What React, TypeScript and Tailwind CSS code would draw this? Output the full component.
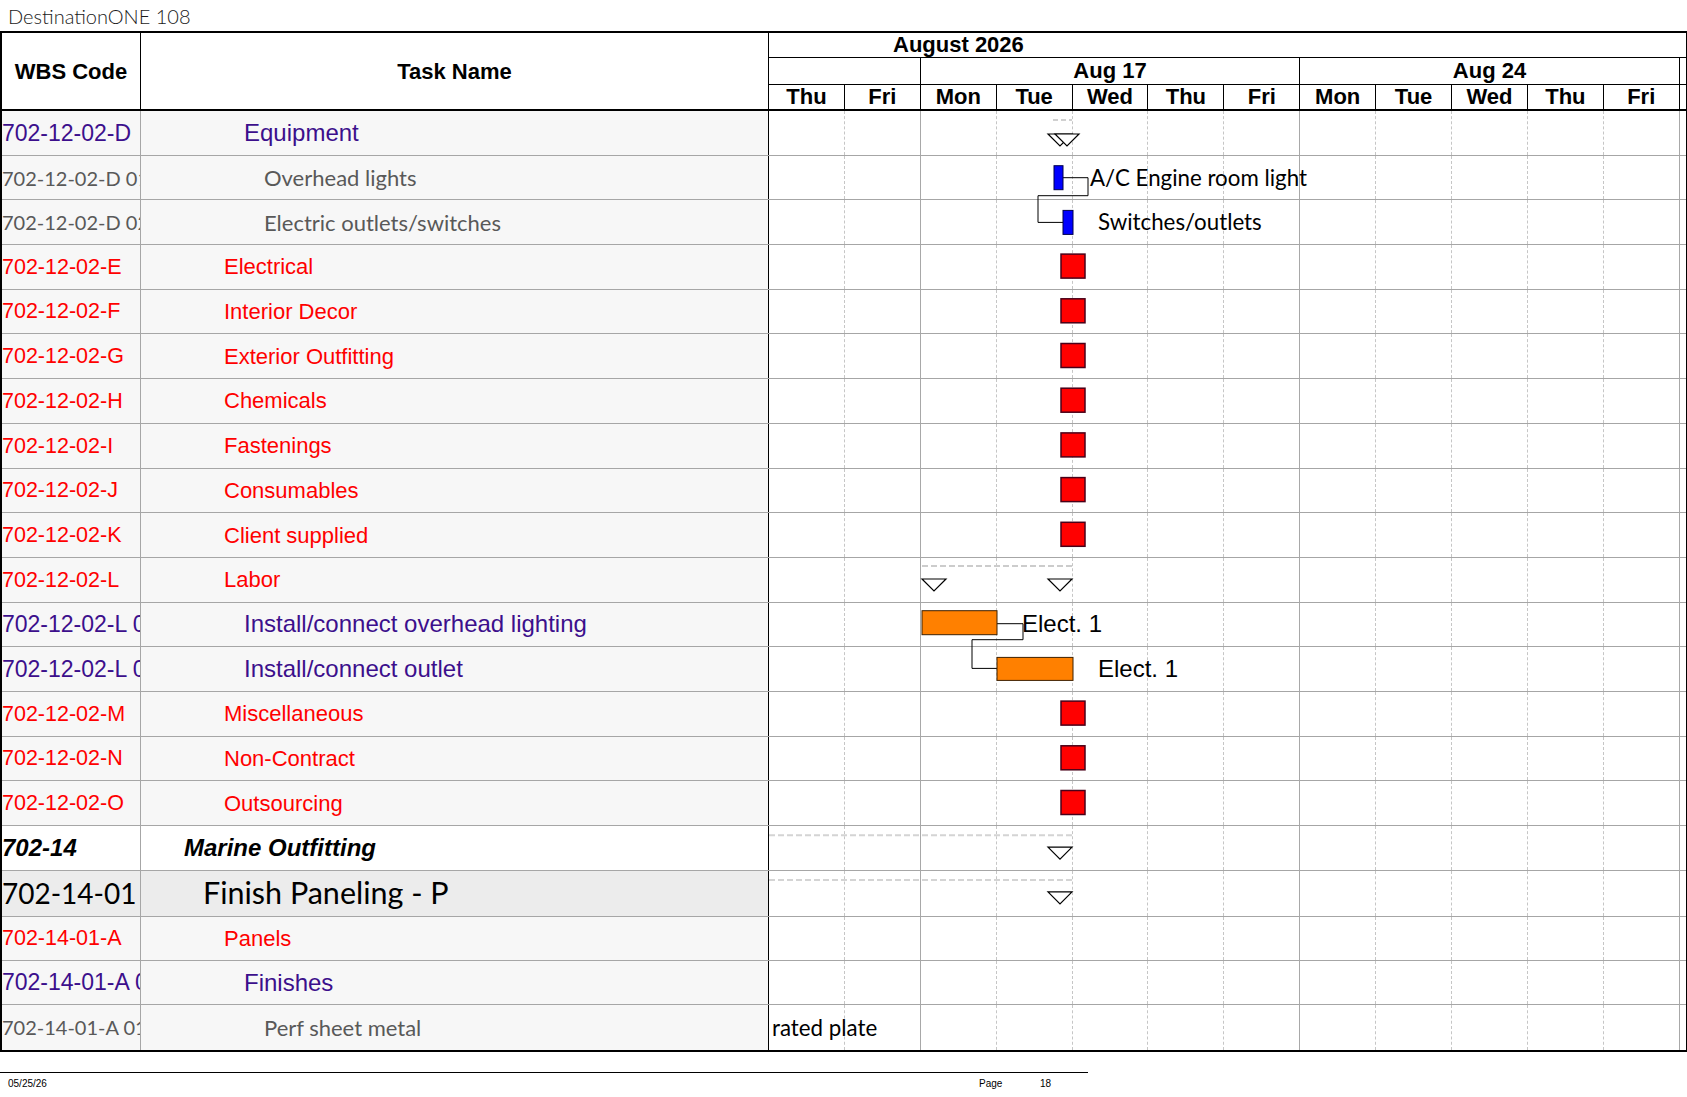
import React from "react";

type Kind = "purple" | "red" | "grey" | "bold" | "big";

type Row = {
  wbs: string;
  name: string;
  kind: Kind;
  indent: number;
  h: number;
  milestone?: boolean;
};

const rows: Row[] = [
  { wbs: "702-12-02-D", name: "Equipment", kind: "purple", indent: 103, h: 44.7 },
  { wbs: "702-12-02-D 01", name: "Overhead lights", kind: "grey", indent: 123, h: 44.7 },
  { wbs: "702-12-02-D 02", name: "Electric outlets/switches", kind: "grey", indent: 123, h: 44.7 },
  { wbs: "702-12-02-E", name: "Electrical", kind: "red", indent: 83, h: 44.7, milestone: true },
  { wbs: "702-12-02-F", name: "Interior Decor", kind: "red", indent: 83, h: 44.7, milestone: true },
  { wbs: "702-12-02-G", name: "Exterior Outfitting", kind: "red", indent: 83, h: 44.7, milestone: true },
  { wbs: "702-12-02-H", name: "Chemicals", kind: "red", indent: 83, h: 44.7, milestone: true },
  { wbs: "702-12-02-I", name: "Fastenings", kind: "red", indent: 83, h: 44.7, milestone: true },
  { wbs: "702-12-02-J", name: "Consumables", kind: "red", indent: 83, h: 44.7, milestone: true },
  { wbs: "702-12-02-K", name: "Client supplied", kind: "red", indent: 83, h: 44.7, milestone: true },
  { wbs: "702-12-02-L", name: "Labor", kind: "red", indent: 83, h: 44.7 },
  { wbs: "702-12-02-L 01", name: "Install/connect overhead lighting", kind: "purple", indent: 103, h: 44.7 },
  { wbs: "702-12-02-L 02", name: "Install/connect outlet", kind: "purple", indent: 103, h: 44.7 },
  { wbs: "702-12-02-M", name: "Miscellaneous", kind: "red", indent: 83, h: 44.7, milestone: true },
  { wbs: "702-12-02-N", name: "Non-Contract", kind: "red", indent: 83, h: 44.7, milestone: true },
  { wbs: "702-12-02-O", name: "Outsourcing", kind: "red", indent: 83, h: 44.7, milestone: true },
  { wbs: "702-14", name: "Marine Outfitting", kind: "bold", indent: 43, h: 44.7 },
  { wbs: "702-14-01", name: "Finish Paneling - P", kind: "big", indent: 62, h: 46 },
  { wbs: "702-14-01-A", name: "Panels", kind: "red", indent: 83, h: 44.3 },
  { wbs: "702-14-01-A 01", name: "Finishes", kind: "purple", indent: 103, h: 44.3 },
  { wbs: "702-14-01-A 01 01", name: "Perf sheet metal", kind: "grey", indent: 123, h: 44.3 },
];

const tops: number[] = [];
rows.reduce((acc, r) => {
  tops.push(acc);
  return acc + r.h;
}, 0);

// task name column
const textClass: Record<Kind, string> = {
  purple: "font-['Liberation_Sans',Arial,sans-serif] text-[24px] text-[#3c0f8c]",
  red: "font-['Liberation_Sans',Arial,sans-serif] text-[22px] text-[#ff0000]",
  grey: "font-['Lato',sans-serif] text-[22px] text-[#595959]",
  bold: "font-['Liberation_Sans',Arial,sans-serif] text-[24px] font-bold italic text-black",
  big: "font-['Lato',sans-serif] text-[30.5px] text-black",
};

// wbs column
const wbsClass: Record<Kind, string> = {
  purple: "font-['Liberation_Sans',Arial,sans-serif] text-[23px] text-[#3c0f8c]",
  red: "font-['Liberation_Sans',Arial,sans-serif] text-[21.5px] text-[#ff0000]",
  grey: "font-['Lato',sans-serif] text-[20px] text-[#595959]",
  bold: "font-['Liberation_Sans',Arial,sans-serif] text-[24px] font-bold italic text-black",
  big: "font-['Lato',sans-serif] text-[28px] text-black",
};

const rowBg: Record<Kind, string> = {
  purple: "bg-[#f7f7f7]",
  red: "bg-[#f7f7f7]",
  grey: "bg-[#f7f7f7]",
  bold: "bg-white",
  big: "bg-[#ececec]",
};

const days = ["Thu", "Fri", "Mon", "Tue", "Wed", "Thu", "Fri", "Mon", "Tue", "Wed", "Thu", "Fri"];
const weekEnd = [1, 6, 11];

function GridCells() {
  return (
    <div className="flex h-full">
      {days.map((d, i) =>
        weekEnd.includes(i) ? (
          <div key={i} className="w-[75.9px] h-full border-r border-solid border-[#a8a8a8]" />
        ) : (
          <div key={i} className="w-[75.9px] h-full border-r border-dashed border-[#c6c6c6]" />
        )
      )}
      <div className="flex-1" />
    </div>
  );
}

function Tri({ x, y }: { x: number; y: number }) {
  return (
    <polygon
      points={`${x},${y} ${x + 24},${y} ${x + 12},${y + 12}`}
      fill="white"
      stroke="black"
      strokeWidth="1.2"
    />
  );
}

function Chart() {
  const t = tops;
  return (
    <svg
      className="absolute left-[767px] top-0 pointer-events-none"
      width="917"
      height="941"
      viewBox="769 0 917 941"
    >
      {/* Equipment summary */}
      <line x1="1053" y1={t[0] + 9} x2="1072" y2={t[0] + 9} stroke="#d0d0d0" strokeWidth="2" strokeDasharray="5 3" />
      <Tri x={1048} y={t[0] + 23} />
      <Tri x={1055} y={t[0] + 23} />

      {/* Overhead lights / switches */}
      <path
        d={`M1063 ${t[1] + 22} H1088 V${t[1] + 40} H1038 V${t[2] + 22} H1063`}
        fill="none"
        stroke="black"
        strokeWidth="1"
      />
      <rect x="1054" y={t[1] + 10} width="9" height="24" fill="#0000ff" stroke="#00004a" strokeWidth="1" />
      <rect x="1063" y={t[2] + 10} width="10" height="24" fill="#0000ff" stroke="#00004a" strokeWidth="1" />

      {/* milestones */}
      {rows.map((r, i) =>
        r.milestone ? (
          <rect key={i} x="1061" y={t[i] + 9} width="24" height="24" fill="#ff0000" stroke="#4a0018" strokeWidth="1.5" />
        ) : null
      )}

      {/* Labor summary */}
      <line x1="922" y1={t[10] + 8} x2="1072" y2={t[10] + 8} stroke="#cccccc" strokeWidth="2" strokeDasharray="6 3" />
      <Tri x={922} y={t[10] + 21} />
      <Tri x={1048} y={t[10] + 21} />

      {/* Install bars */}
      <path
        d={`M997 ${t[11] + 21} H1023 V${t[11] + 37} H972 V${t[12] + 21} H997`}
        fill="none"
        stroke="black"
        strokeWidth="1"
      />
      <rect x="922" y={t[11] + 8} width="75" height="24" fill="#ff8000" stroke="#3d2000" strokeWidth="1" />
      <rect x="997" y={t[12] + 10} width="76" height="23" fill="#ff8000" stroke="#3d2000" strokeWidth="1" />

      {/* Marine outfitting / finish paneling */}
      <line x1="769" y1={t[16] + 9} x2="1072" y2={t[16] + 9} stroke="#d4d4d4" strokeWidth="2" strokeDasharray="6 3" />
      <Tri x={1048} y={t[16] + 21} />
      <line x1="769" y1={t[17] + 9} x2="1072" y2={t[17] + 9} stroke="#d4d4d4" strokeWidth="2" strokeDasharray="6 3" />
      <Tri x={1048} y={t[17] + 21} />
    </svg>
  );
}

function Label({ x, y, children, arial }: { x: number; y: number; children: React.ReactNode; arial?: boolean }) {
  return (
    <span
      className={
        arial
          ? "absolute -translate-y-1/2 whitespace-nowrap font-['Liberation_Sans',Arial,sans-serif] text-[24px] leading-none text-black"
          : "absolute -translate-y-1/2 whitespace-nowrap font-['Lato',sans-serif] text-[22.3px] leading-none text-black"
      }
      style={{ left: x - 2, top: y }}
    >
      {children}
    </span>
  );
}

export default function App() {
  return (
    <div className="w-[1687px] h-[1097px] bg-white overflow-hidden font-['Liberation_Sans',Arial,sans-serif]">
      {/* Title */}
      <div className="h-[31px] pl-[8px] flex items-center font-['Lato',sans-serif] text-[20px] font-light text-[#1a1a1a]">
        DestinationONE 108
      </div>

      {/* Table */}
      <div className="w-[1687px] border-t-2 border-l-2 border-r border-b-2 border-black">
        {/* Header */}
        <div className="flex h-[78px] border-b-2 border-black">
          <div className="w-[139px] border-r border-black flex items-center justify-center text-[22px] font-bold">
            WBS Code
          </div>
          <div className="w-[628px] border-r border-black flex items-center justify-center text-[22px] font-bold">
            Task Name
          </div>
          <div className="flex-1 flex flex-col text-[22px] font-bold">
            <div className="h-[25px] border-b border-black pl-[124px] flex items-center leading-none">August 2026</div>
            <div className="h-[27px] border-b border-black flex">
              <div className="w-[151.8px] border-r border-black" />
              <div className="w-[379.5px] border-r border-black flex items-center justify-center leading-none">Aug 17</div>
              <div className="w-[379.5px] border-r border-black flex items-center justify-center leading-none">Aug 24</div>
              <div className="flex-1" />
            </div>
            <div className="flex-1 flex">
              {days.map((d, i) => (
                <div key={i} className="w-[75.9px] border-r border-black flex items-center justify-center leading-none">
                  {d}
                </div>
              ))}
              <div className="flex-1" />
            </div>
          </div>
        </div>

        {/* Body */}
        <div className="relative">
          {rows.map((r, i) => (
            <div
              key={i}
              className={i === rows.length - 1 ? "flex" : "flex border-b border-[#a6a6a6]"}
              style={{ height: r.h }}
            >
              <div
                className={`w-[139px] border-r border-[#a6a6a6] flex items-center overflow-hidden whitespace-nowrap ${rowBg[r.kind]} ${wbsClass[r.kind]}`}
              >
                {r.wbs}
              </div>
              <div
                className={`w-[628px] border-r border-black flex items-center overflow-hidden whitespace-nowrap ${rowBg[r.kind]} ${textClass[r.kind]}`}
                style={{ paddingLeft: r.indent }}
              >
                {r.name}
              </div>
              <div className="flex-1 bg-white">
                <GridCells />
              </div>
            </div>
          ))}

          <Chart />

          <Label x={1090} y={tops[1] + 22}>A/C Engine room light</Label>
          <Label x={1098} y={tops[2] + 22}>Switches/outlets</Label>
          <Label x={1022} y={tops[11] + 21} arial>Elect. 1</Label>
          <Label x={1098} y={tops[12] + 22} arial>Elect. 1</Label>
          <Label x={772} y={tops[20] + 22}>rated plate</Label>
        </div>
      </div>

      {/* Footer */}
      <div className="mt-[20px] w-[1088px] border-t border-black pt-[6px] flex text-[10px] leading-none text-black">
        <div className="w-[979px] pl-[8px]">05/25/26</div>
        <div className="w-[61px]">Page</div>
        <div>18</div>
      </div>
    </div>
  );
}
